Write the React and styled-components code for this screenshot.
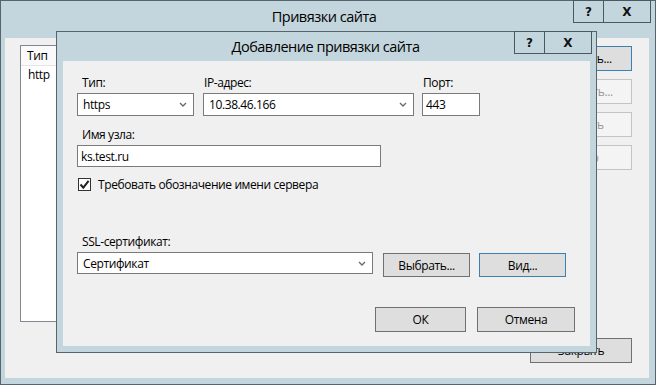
import React from 'react';
import styled, {createGlobalStyle} from 'styled-components';

const GlobalStyle = createGlobalStyle`
    html, body {
        margin: 0;
        padding: 0;
        background: #ffffff;
    }
    body {
        font-family: "Open Sans", "Noto Sans", sans-serif;
        font-size: 12px;
        letter-spacing: -0.4px;
        color: #000;
    }
    * {
        box-sizing: border-box;
    }
`;

const FRAME = '#c4d6dd';
const FRAME_EDGE = '#56646d';

const Chevron = () => (
    <svg width="8" height="5" viewBox="0 0 8 5">
        <polyline points="1,1 4,4 7,1" fill="none" stroke="#6a6a6a" strokeWidth="1.4" />
    </svg>
);

const Check = () => (
    <svg width="11" height="11" viewBox="0 0 11 11">
        <polyline points="1.5,5.5 4.3,8.6 9.6,1.8" fill="none" stroke="#222" strokeWidth="2" />
    </svg>
);

const CaptionButtons = () => (
    <Caption>
        <CaptionButton $w={29}>?</CaptionButton>
        <CaptionButton $w={47}>X</CaptionButton>
    </Caption>
);

class App extends React.Component {
    render() {
        return (
            <>
                <GlobalStyle />
                <Desktop>
                    <Window>
                        <TitleBar>
                            <Title>Привязки сайта</Title>
                            <CaptionButtons />
                        </TitleBar>
                        <Client>
                            <BodyRow>
                                <ListBox>
                                    <ListHeader>
                                        <HeaderCell>Тип</HeaderCell>
                                    </ListHeader>
                                    <ListRow>http</ListRow>
                                </ListBox>
                                <SideButtons>
                                    <Button $focus $w={102} $h={25}>Добавить...</Button>
                                    <Button disabled $w={102} $h={25}>Изменить...</Button>
                                    <Button disabled $w={102} $h={25}>Удалить</Button>
                                    <Button disabled $w={102} $h={25}>Обзор</Button>
                                </SideButtons>
                            </BodyRow>
                            <BottomRow>
                                <Button $w={102} $h={25}>Закрыть</Button>
                            </BottomRow>
                        </Client>
                    </Window>

                    <Dialog>
                        <DialogTitleBar>
                            <DialogTitle>Добавление привязки сайта</DialogTitle>
                            <CaptionButtons />
                        </DialogTitleBar>
                        <DialogClient>
                            <FieldRow>
                                <Field $w={117}>
                                    <Label $indent>Тип:</Label>
                                    <Combo>
                                        <span>https</span>
                                        <Chevron />
                                    </Combo>
                                </Field>
                                <Field $w={211} $gap={9}>
                                    <Label>IP-адрес:</Label>
                                    <Combo>
                                        <span>10.38.46.166</span>
                                        <Chevron />
                                    </Combo>
                                </Field>
                                <Field $w={58} $gap={8}>
                                    <Label>Порт:</Label>
                                    <TextBox>443</TextBox>
                                </Field>
                            </FieldRow>

                            <Field $w={304} $top={11}>
                                <Label $indent>Имя узла:</Label>
                                <TextBox $h={22}>ks.test.ru</TextBox>
                            </Field>

                            <CheckRow>
                                <CheckBox><Check /></CheckBox>
                                <span>Требовать обозначение имени сервера</span>
                            </CheckRow>

                            <SslBlock>
                                <Label $indent>SSL-сертификат:</Label>
                                <SslRow>
                                    <Combo $w={296} $h={22}>
                                        <span>Сертификат</span>
                                        <Chevron />
                                    </Combo>
                                    <Button $w={87} $h={24}>Выбрать...</Button>
                                    <Button $focus $w={87} $h={24}>Вид...</Button>
                                </SslRow>
                            </SslBlock>

                            <DialogButtons>
                                <Button $w={91} $h={25}>ОК</Button>
                                <Button $w={98} $h={25}>Отмена</Button>
                            </DialogButtons>
                        </DialogClient>
                    </Dialog>
                </Desktop>
            </>
        );
    }
}

const Desktop = styled.div`
    position: relative;
    width: 656px;
    height: 385px;
    overflow: hidden;
`;

const Window = styled.div`
    width: 656px;
    height: 385px;
    display: flex;
    flex-direction: column;
    background: ${FRAME};
    border: 1px solid ${FRAME_EDGE};
    padding: 0 6px 6px 4px;
`;

const TitleBar = styled.div`
    position: relative;
    height: 37px;
    flex: none;
    display: flex;
    justify-content: center;
`;

const Title = styled.div`
    font-size: 14.5px;
    letter-spacing: -0.5px;
    line-height: 22px;
    margin-top: 5px;
    margin-left: -6px;
`;

const Caption = styled.div`
    position: absolute;
    top: -1px;
    right: -2px;
    display: flex;
    border: 1px solid #4a5862;
    height: 23px;
`;

const CaptionButton = styled.div`
    width: ${p => p.$w}px;
    display: flex;
    align-items: center;
    justify-content: center;
    font-family: "DejaVu Sans", sans-serif;
    font-weight: bold;
    font-size: 12px;
    letter-spacing: 0;
    color: #111;
    & + & {
        border-left: 1px solid #4a5862;
    }
`;

const Client = styled.div`
    flex: 1;
    display: flex;
    flex-direction: column;
    background: #f0f0f0;
    padding: 7px 17px 15px 15px;
`;

const BodyRow = styled.div`
    display: flex;
    gap: 12px;
    height: 277px;
`;

const ListBox = styled.div`
    flex: 1;
    background: #fff;
    border: 1px solid #828790;
`;

const ListHeader = styled.div`
    display: flex;
    height: 20px;
    border-bottom: 1px solid #e5e5e5;
`;

const HeaderCell = styled.div`
    width: 60px;
    padding-left: 6px;
    line-height: 20px;
    background: #fafafa;
    border-right: 1px solid #e5e5e5;
`;

const ListRow = styled.div`
    padding-left: 7px;
    line-height: 18px;
`;

const SideButtons = styled.div`
    display: flex;
    flex-direction: column;
    gap: 8px;
    padding-top: 1px;
`;

const BottomRow = styled.div`
    display: flex;
    justify-content: flex-end;
    margin-top: 16px;
`;

const Button = styled.button`
    width: ${p => p.$w}px;
    height: ${p => p.$h}px;
    flex: none;
    padding: 0;
    font-family: inherit;
    font-size: 12px;
    letter-spacing: -0.4px;
    color: ${p => (p.disabled ? '#9a9a9a' : '#000')};
    background: ${p => (p.disabled ? '#f4f4f4' : '#dedede')};
    border: 1px solid ${p => (p.$focus ? '#3c7fb1' : p.disabled ? '#c4c4c4' : '#707070')};
    border-radius: 0;
`;

const Dialog = styled.div`
    position: absolute;
    left: 56px;
    top: 31px;
    width: 541px;
    height: 322px;
    display: flex;
    flex-direction: column;
    background: ${FRAME};
    border: 1px solid ${FRAME_EDGE};
    padding: 0 6px 6px 6px;
`;

const DialogTitleBar = styled(TitleBar)`
    height: 29px;
`;

const DialogTitle = styled.div`
    font-size: 14.5px;
    letter-spacing: -0.5px;
    line-height: 29px;
    margin-left: -2px;
`;

const DialogClient = styled.div`
    flex: 1;
    display: flex;
    flex-direction: column;
    background: #f0f0f0;
    padding: 14px 15px 14px 14px;
`;

const FieldRow = styled.div`
    display: flex;
`;

const Field = styled.div`
    width: ${p => p.$w}px;
    margin-left: ${p => p.$gap || 0}px;
    margin-top: ${p => p.$top || 0}px;
    display: flex;
    flex-direction: column;
`;

const Label = styled.div`
    line-height: 16px;
    height: 16px;
    margin-bottom: 2px;
    padding-left: ${p => (p.$indent ? 5 : 1)}px;
    white-space: nowrap;
`;

const Combo = styled.div`
    width: ${p => (p.$w ? `${p.$w}px` : 'auto')};
    height: ${p => p.$h || 23}px;
    flex: none;
    display: flex;
    align-items: center;
    justify-content: space-between;
    background: #fff;
    border: 1px solid #7a7a7a;
    padding: 0 6px 0 5px;
`;

const TextBox = styled.div`
    height: ${p => p.$h || 23}px;
    display: flex;
    align-items: center;
    background: #fff;
    border: 1px solid #7a7a7a;
    padding: 0 3px;
`;

const CheckRow = styled.div`
    display: flex;
    align-items: center;
    gap: 7px;
    margin-top: 11px;
    padding-left: 1px;
    height: 13px;
`;

const CheckBox = styled.div`
    width: 13px;
    height: 13px;
    border: 1px solid #333;
    background: #fff;
    display: flex;
    align-items: center;
    justify-content: center;
`;

const SslBlock = styled.div`
    margin-top: 43px;
    display: flex;
    flex-direction: column;
`;

const SslRow = styled.div`
    display: flex;
    align-items: flex-start;
    gap: 10px;
    & > button {
        margin-top: 1px;
    }
    & > button + button {
        margin-left: -1px;
    }
`;

const DialogButtons = styled.div`
    margin-top: auto;
    display: flex;
    justify-content: flex-end;
    gap: 11px;
`;

export default App;
